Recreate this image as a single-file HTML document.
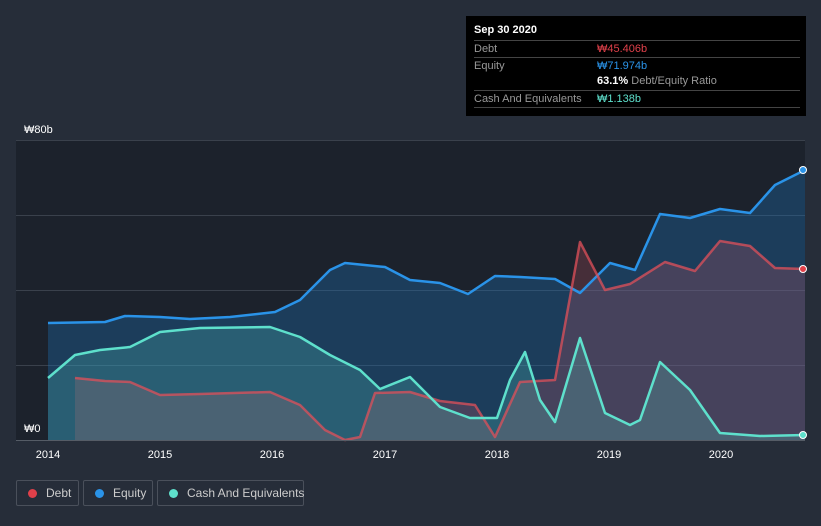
<!DOCTYPE html>
<html><head><meta charset="utf-8"><style>
html,body{margin:0;background:#262d39;width:821px;height:526px;overflow:hidden;font-family:"Liberation Sans","Noto Sans CJK KR",sans-serif}
.tip{position:absolute;left:466px;top:16px;width:340px;height:100px;background:#000;color:#fff;font-size:11px}
.tip .r{position:absolute;left:8px;width:326px;border-top:1px solid #444;height:16px;line-height:16px}
.lab{color:#999;position:absolute;left:0}
.val{position:absolute;left:123px}
.leg{position:absolute;top:480px;height:26px;border:1px solid #4a505b;border-radius:2px;color:#ccc;font-size:12px;line-height:24px;box-sizing:border-box;white-space:nowrap}
.leg i{display:inline-block;width:9px;height:9px;border-radius:50%;margin:0 9px 0 11px;vertical-align:-1px}
</style></head><body>
<svg width="821" height="526" style="position:absolute;left:0;top:0">
<rect x="16" y="140" width="789" height="300" fill="#1c222c"/>
<g stroke="#3a414c" stroke-width="1">
<line x1="16" y1="140.5" x2="805" y2="140.5"/><line x1="16" y1="215.5" x2="805" y2="215.5"/><line x1="16" y1="290.5" x2="805" y2="290.5"/><line x1="16" y1="365.5" x2="805" y2="365.5"/></g>
<polygon fill="#1e6fb5" fill-opacity="0.35" points="48,440 48,323 105,322 125,316 160,317 190,319 230,317 275,312 300,300 330,270 345,263 385,267 410,280 440,283 468,294 495,276 520,277 555,279 580,293 610,263 635,270 660,214 690,218 720,209 750,213 775,185 805,170 805,440"/>
<polygon fill="#c2545f" fill-opacity="0.25" points="75,440 75,378 105,381 130,382 160,395 200,394 270,392 300,405 325,430 345,440 360,437 375,393 410,392 440,401 475,405 495,437 520,382 555,380 580,242 605,290 630,284 665,262 695,271 720,241 750,246 775,268 805,269 805,440"/>
<polygon fill="#5ad8c8" fill-opacity="0.22" points="48,440 48,378 75,355 100,350 130,347 160,332 200,328 270,327 300,337 330,355 360,370 380,389 410,377 440,407 470,418 497,418 510,380 525,352 540,400 555,422 580,338 605,413 630,425 640,420 660,362 690,390 720,433 760,436 805,435 805,440"/>
<polyline fill="none" stroke="#2a93e8" stroke-width="2.5" stroke-linejoin="round" points="48,323 105,322 125,316 160,317 190,319 230,317 275,312 300,300 330,270 345,263 385,267 410,280 440,283 468,294 495,276 520,277 555,279 580,293 610,263 635,270 660,214 690,218 720,209 750,213 775,185 805,170"/>
<polyline fill="none" stroke="#e0505a" stroke-width="2.5" stroke-opacity="0.75" stroke-linejoin="round" points="75,378 105,381 130,382 160,395 200,394 270,392 300,405 325,430 345,440 360,437 375,393 410,392 440,401 475,405 495,437 520,382 555,380 580,242 605,290 630,284 665,262 695,271 720,241 750,246 775,268 805,269"/>
<polyline fill="none" stroke="#5ee0cc" stroke-width="2.5" stroke-linejoin="round" points="48,378 75,355 100,350 130,347 160,332 200,328 270,327 300,337 330,355 360,370 380,389 410,377 440,407 470,418 497,418 510,380 525,352 540,400 555,422 580,338 605,413 630,425 640,420 660,362 690,390 720,433 760,436 805,435"/>
<line x1="16" y1="440.5" x2="805" y2="440.5" stroke="#555c66"/>
<circle cx="803" cy="170" r="3.5" fill="#2a93e8" stroke="#fff" stroke-width="1"/>
<circle cx="803" cy="269" r="3.5" fill="#e0404a" stroke="#fff" stroke-width="1"/>
<circle cx="803" cy="435" r="3.5" fill="#5ee0cc" stroke="#fff" stroke-width="1"/>
<g fill="#fff" font-size="11" font-family="Liberation Sans,Noto Sans CJK KR,sans-serif">
<text x="24" y="133">₩80b</text><text x="24" y="432">₩0</text>
<g text-anchor="middle"><text x="48" y="458">2014</text><text x="160" y="458">2015</text><text x="272" y="458">2016</text><text x="385" y="458">2017</text><text x="497" y="458">2018</text><text x="609" y="458">2019</text><text x="721" y="458">2020</text></g></g>
</svg>
<div class="tip">
<div style="position:absolute;left:8px;top:8px;font-weight:bold">Sep 30 2020</div>
<div class="r" style="top:24px"><span class="lab">Debt</span><span class="val" style="color:#e0404a">₩45.406b</span></div>
<div class="r" style="top:41px"><span class="lab">Equity</span><span class="val" style="color:#2a93e8">₩71.974b</span></div>
<div class="r" style="top:57px;border:none"><span class="val"><b>63.1%</b> <span style="color:#999">Debt/Equity Ratio</span></span></div>
<div class="r" style="top:74px"><span class="lab">Cash And Equivalents</span><span class="val" style="color:#5ee0cc">₩1.138b</span></div>
<div class="r" style="top:91px;height:0"></div>
</div>
<div class="leg" style="left:16px;width:63px"><i style="background:#e0404a"></i>Debt</div>
<div class="leg" style="left:83px;width:70px"><i style="background:#2a93e8"></i>Equity</div>
<div class="leg" style="left:157px;width:147px"><i style="background:#5ee0cc"></i>Cash And Equivalents</div>
</body></html>
